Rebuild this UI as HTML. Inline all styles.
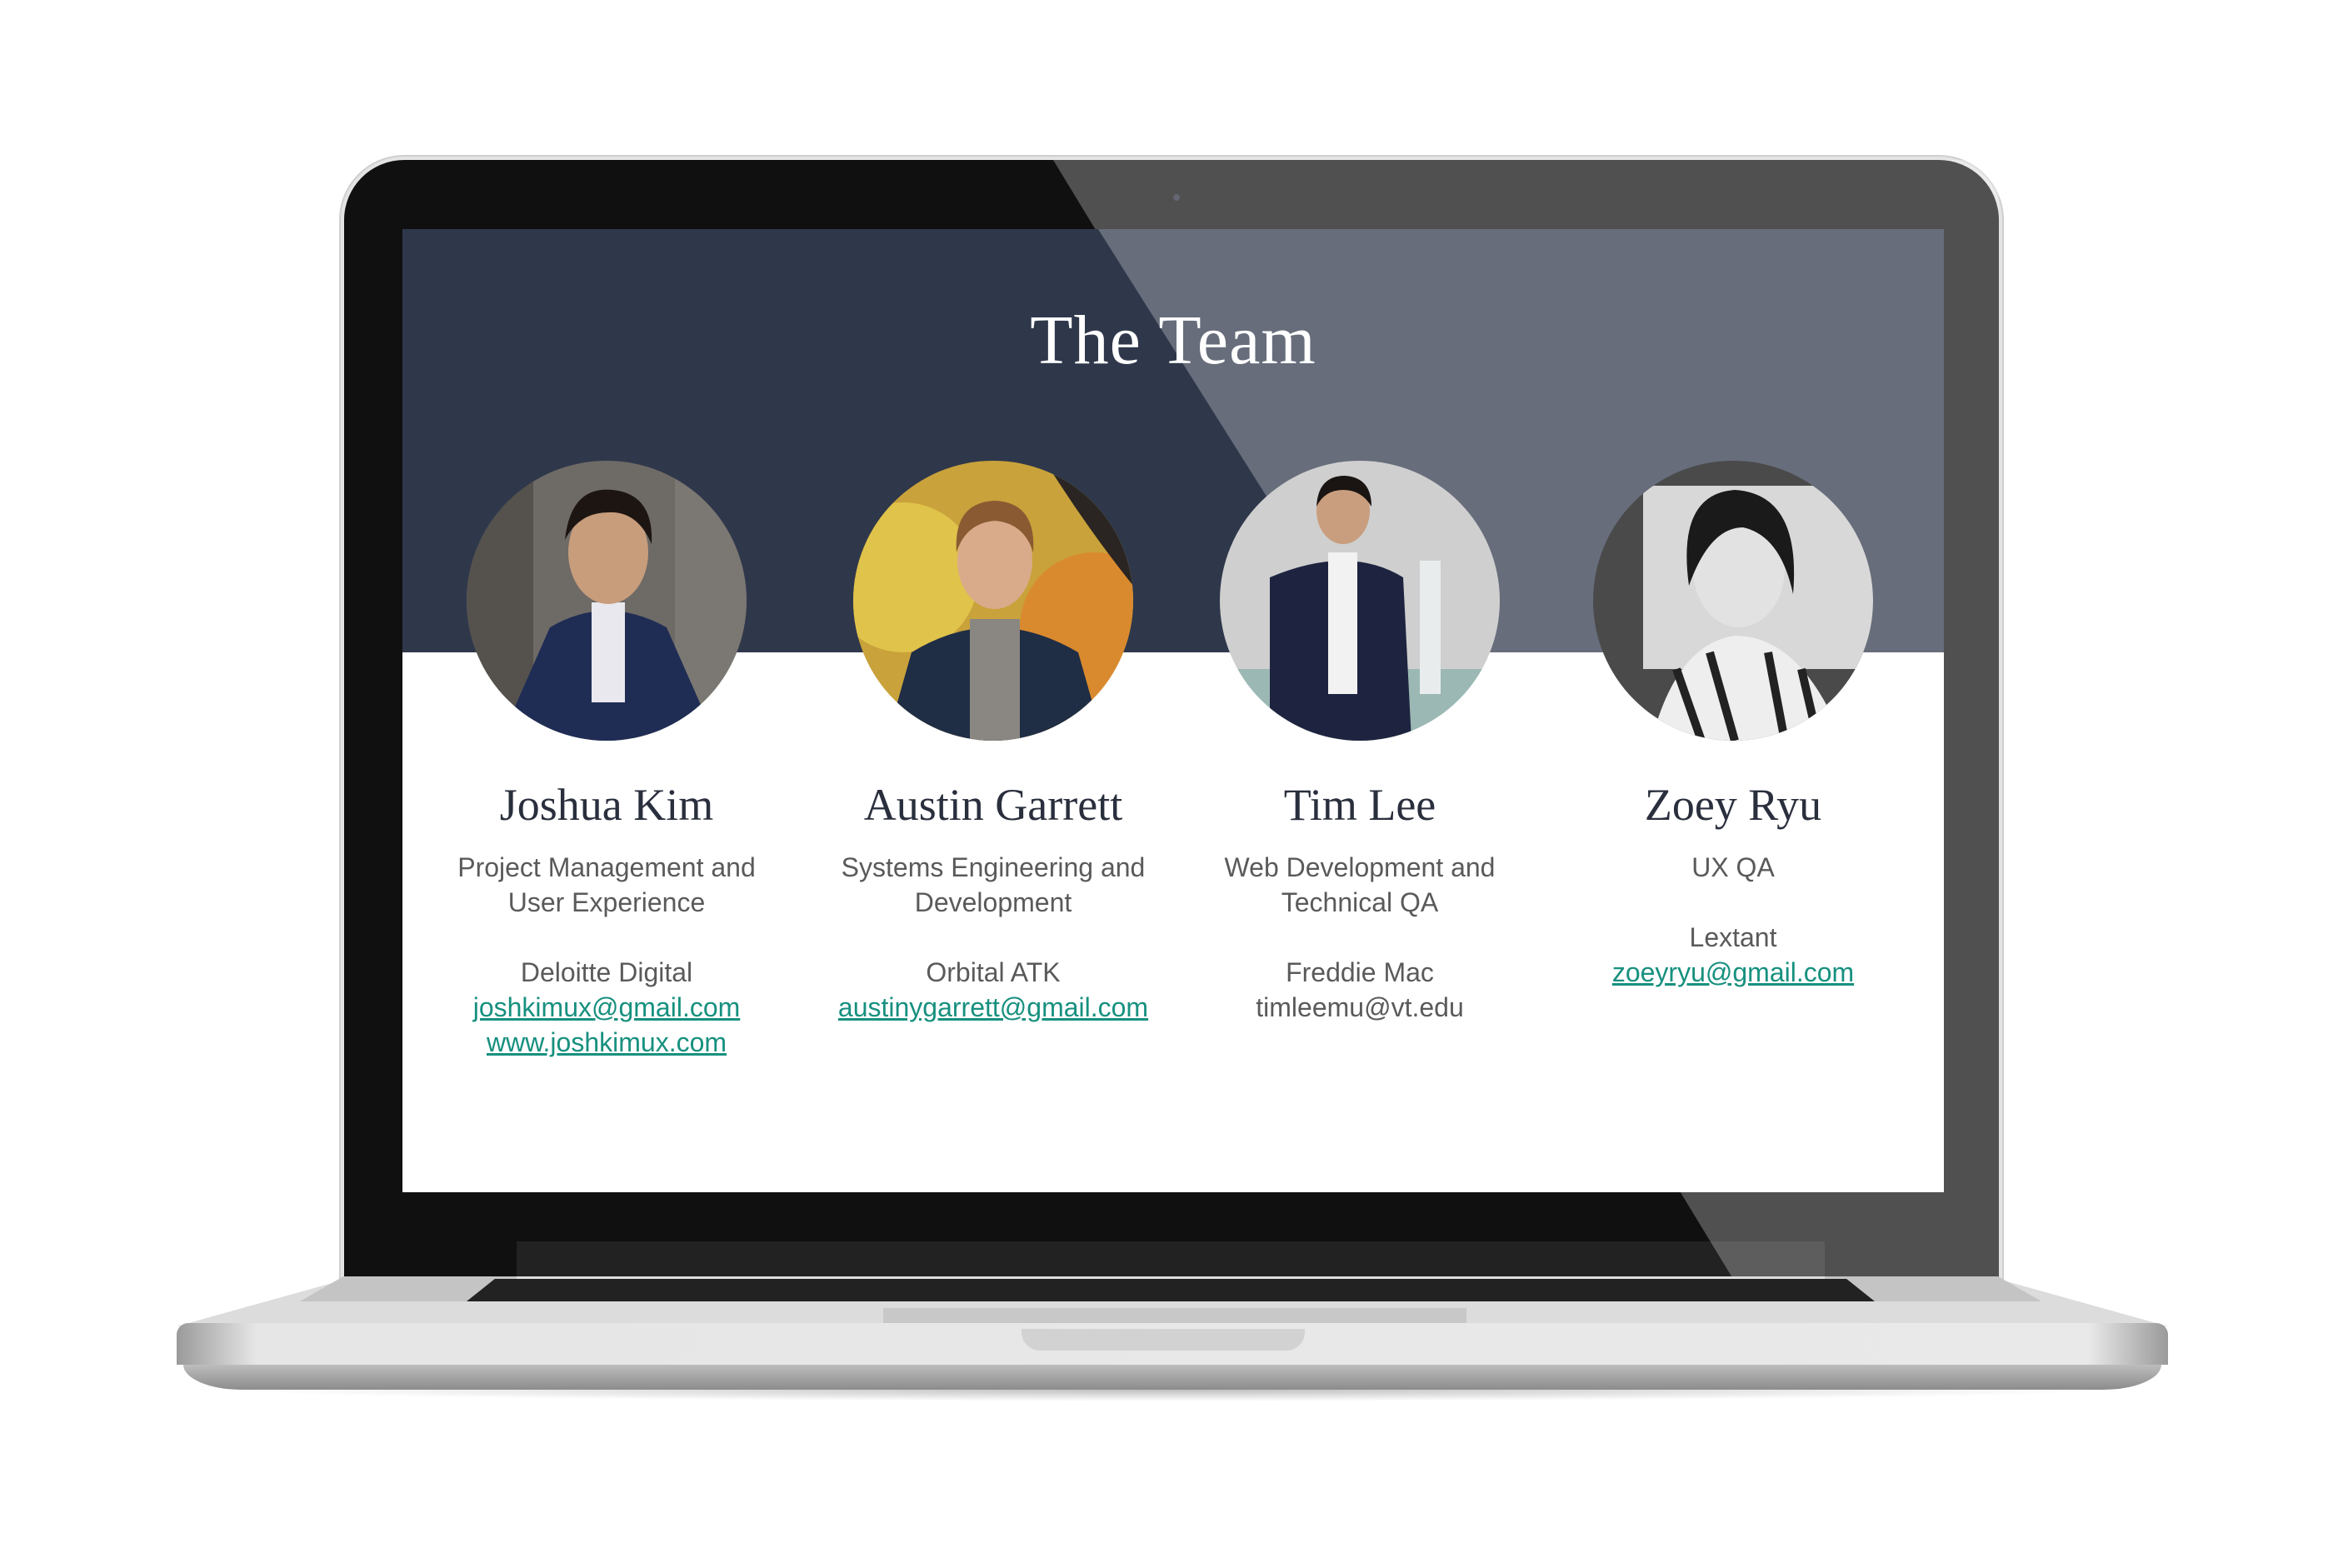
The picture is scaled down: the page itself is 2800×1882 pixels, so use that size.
<!DOCTYPE html>
<html><head><meta charset="utf-8"><style>
*{margin:0;padding:0;box-sizing:border-box}
body{width:2800px;height:1882px;background:#fff;position:relative;overflow:hidden;font-family:"Liberation Sans",sans-serif}
.abs{position:absolute}
#lid{left:413px;top:192px;width:1986px;height:1343px;background:#101010;border-radius:72px 72px 0 0;box-shadow:0 0 0 4px #e4e4e4,0 0 0 6px #cfcfcf}
#screen{left:483px;top:275px;width:1850px;height:1156px;background:#fff;overflow:hidden}
#hdr{left:0;top:0;width:1850px;height:508px;background:#2f384b}
h1{position:absolute;left:0;width:1850px;top:85px;text-align:center;font-family:"Liberation Serif","DejaVu Serif",serif;font-weight:normal;font-size:84px;color:#fff;letter-spacing:1px}
.col{position:absolute;width:520px;text-align:center;top:0}
.ph{position:absolute;left:92px;top:278px;width:336px;height:336px;border-radius:50%;overflow:hidden}
.nm{position:absolute;left:0;width:520px;top:660px;font-family:"Liberation Serif","DejaVu Serif",serif;font-size:54px;color:#2a2f3d}
.tx{position:absolute;left:0;width:520px;top:745px;font-size:32px;line-height:42px;color:#5a5a5a}
.tx a{color:#17907f;text-decoration:underline}
</style></head><body>
<div id="lid" class="abs"></div>
<div class="abs" style="left:620px;top:1490px;width:1570px;height:45px;background:#222"></div>
<div class="abs" style="left:1408px;top:233px;width:8px;height:8px;border-radius:50%;background:#2a2c40"></div>
<svg class="abs" style="left:0;top:0" width="2800" height="1882"><polygon points="1264,192 2399,192 2399,1535 2080,1535" fill="#fff" fill-opacity="0.27"/></svg>
<div id="screen" class="abs">
<div id="hdr" class="abs"></div>
<svg class="abs" style="left:0;top:0" width="1850" height="508"><polygon points="835,0 1850,0 1850,508 1155,508" fill="#fff" fill-opacity="0.27"/></svg>
<h1>The Team</h1>
<div class="col" style="left:-15px">
 <div class="ph"><svg width="336" height="336"><rect width="336" height="336" fill="#6e6a66"/><rect x="0" y="0" width="80" height="336" fill="#55524e"/><rect x="250" y="0" width="86" height="336" fill="#7b7772"/><path d="M100 200 Q168 160 240 200 L300 336 L40 336Z" fill="#1f2d55"/><rect x="150" y="170" width="40" height="120" fill="#e8e8ee"/><ellipse cx="170" cy="110" rx="48" ry="62" fill="#c79d7c"/><path d="M118 95 Q125 30 175 35 Q225 40 222 100 Q205 60 170 62 Q135 62 118 95Z" fill="#1c1512"/></svg></div>
 <div class="nm">Joshua Kim</div>
 <div class="tx">Project Management and<br>User Experience<br><br>Deloitte Digital<br><a>joshkimux@gmail.com</a><br><a>www.joshkimux.com</a></div>
</div>
<div class="col" style="left:449px">
 <div class="ph"><svg width="336" height="336"><rect width="336" height="336" fill="#c9a23b"/><circle cx="60" cy="140" r="90" fill="#e0c34a"/><circle cx="290" cy="200" r="90" fill="#d98a2e"/><path d="M230 0 L336 0 L336 150 Q280 80 230 0Z" fill="#2a2522"/><path d="M70 230 Q168 170 270 230 L300 336 L40 336Z" fill="#1f2d45"/><rect x="140" y="190" width="60" height="146" fill="#8a8782"/><ellipse cx="170" cy="120" rx="45" ry="58" fill="#d9ab8a"/><path d="M124 110 Q120 50 170 48 Q220 50 216 110 Q205 75 170 72 Q135 75 124 110Z" fill="#8a5a32"/></svg></div>
 <div class="nm">Austin Garrett</div>
 <div class="tx">Systems Engineering and<br>Development<br><br>Orbital ATK<br><a>austinygarrett@gmail.com</a></div>
</div>
<div class="col" style="left:889px">
 <div class="ph"><svg width="336" height="336"><rect width="336" height="336" fill="#cfcfcf"/><rect x="0" y="250" width="336" height="86" fill="#9bb8b4"/><rect x="240" y="120" width="25" height="160" fill="#e8ecec"/><path d="M60 140 Q155 100 220 140 L230 336 L60 336Z" fill="#1e2440"/><rect x="130" y="110" width="35" height="170" fill="#f2f2f2"/><ellipse cx="148" cy="60" rx="32" ry="40" fill="#c99e7e"/><path d="M116 55 Q118 18 150 18 Q182 20 182 55 Q170 35 148 35 Q126 35 116 55Z" fill="#1a1512"/></svg></div>
 <div class="nm">Tim Lee</div>
 <div class="tx">Web Development and<br>Technical QA<br><br>Freddie Mac<br>timleemu@vt.edu</div>
</div>
<div class="col" style="left:1337px">
 <div class="ph"><svg width="336" height="336"><rect width="336" height="336" fill="#4a4a4a"/><rect x="60" y="30" width="276" height="220" fill="#d8d8d8"/><path d="M70 336 Q100 220 170 210 Q250 210 300 336Z" fill="#eee"/><path d="M100 250 L130 336 M140 230 L170 336 M210 230 L230 336 M250 250 L270 336" stroke="#222" stroke-width="10"/><ellipse cx="175" cy="130" rx="55" ry="70" fill="#e2e2e2"/><path d="M115 150 Q100 40 170 35 Q250 40 240 160 Q225 90 180 80 Q140 80 115 150Z" fill="#1a1a1a"/></svg></div>
 <div class="nm">Zoey Ryu</div>
 <div class="tx">UX QA<br><br>Lextant<br><a>zoeyryu@gmail.com</a></div>
</div>
</div>
<!-- base -->
<div class="abs" style="left:212px;top:1532px;width:2390px;height:60px;background:#dcdcdc;clip-path:polygon(9% 0,91% 0,100% 100%,0 100%)"></div>
<div class="abs" style="left:360px;top:1532px;width:260px;height:30px;background:#c4c4c4;clip-path:polygon(20% 0,100% 0,100% 100%,0 100%)"></div>
<div class="abs" style="left:2190px;top:1532px;width:260px;height:30px;background:#c4c4c4;clip-path:polygon(0 0,80% 0,100% 100%,0 100%)"></div>
<div class="abs" style="left:560px;top:1535px;width:1690px;height:27px;background:#222;clip-path:polygon(2% 0,98% 0,100% 100%,0 100%)"></div>
<div class="abs" style="left:212px;top:1588px;width:2390px;height:50px;border-radius:14px 14px 0 0;background:linear-gradient(90deg,#9a9a9a 0,#e6e6e6 4%,#e9e9e9 96%,#9a9a9a 100%)"></div>
<div class="abs" style="left:1060px;top:1570px;width:700px;height:18px;background:#c8c8c8"></div>
<div class="abs" style="left:1226px;top:1595px;width:340px;height:26px;border-radius:0 0 22px 22px;background:#d2d2d2"></div>
<div class="abs" style="left:220px;top:1638px;width:2374px;height:30px;border-radius:0 0 70px 70px/0 0 30px 30px;background:linear-gradient(#bdbdbd,#8c8c8c)"></div>
<div class="abs" style="left:260px;top:1668px;width:2290px;height:14px;background:radial-gradient(ellipse at 50% 0,rgba(0,0,0,.25),rgba(0,0,0,0) 70%)"></div>
</body></html>
